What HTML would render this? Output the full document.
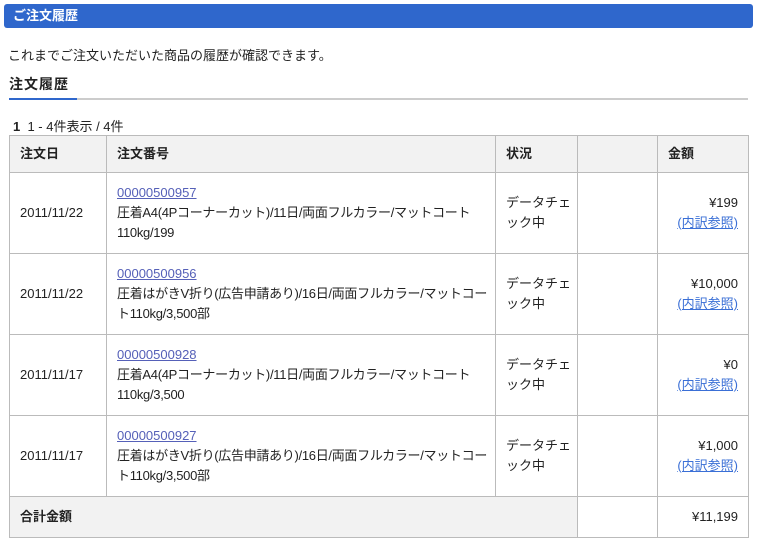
<!DOCTYPE html>
<html><head><meta charset="utf-8"><style>
body{margin:0;background:#fff;font-family:"Liberation Sans","Noto Sans CJK JP",sans-serif;font-size:13px;color:#222;width:765px;height:553px;overflow:hidden;position:relative}
.bar{position:absolute;left:4px;top:4px;width:749px;height:24px;background:#2f67cc;border-radius:3px;color:#fff;font-weight:bold;font-size:13px;line-height:24px;padding-left:9px;box-sizing:border-box}
.intro{position:absolute;left:8px;top:45px}
.h2{position:absolute;left:9px;top:74px;font-weight:bold;font-size:14px;letter-spacing:1px}
.line{position:absolute;left:9px;top:98px;width:739px;height:2px;background:#ccc}
.line i{position:absolute;left:0;top:0;width:68px;height:2px;background:#2f67cc}
.pg{position:absolute;left:13px;top:116px;font-size:13px}
table{position:absolute;left:9px;top:135px;border-collapse:collapse;width:739px;table-layout:fixed}
td,th{border:1px solid #bbb;padding:0 10px;vertical-align:middle;line-height:20px;text-align:left}
th{background:#f2f2f2;height:36px;font-weight:bold}
tr.r td{height:80px}
td.st{padding-right:4px}
td.num{white-space:nowrap;letter-spacing:-0.3px;overflow:hidden}
a{color:#3a6fd6;text-decoration:underline}
.num a{color:#5560b8;letter-spacing:0}
.rt{text-align:right}
tr.t td{height:40px}
tr.t td.g{background:#f2f2f2;font-weight:bold}
</style></head><body>
<div class="bar">ご注文履歴</div>
<div class="intro">これまでご注文いただいた商品の履歴が確認できます。</div>
<div class="h2">注文履歴</div>
<div class="line"><i></i></div>
<div class="pg"><b>1</b>&nbsp; 1 - 4件表示 / 4件</div>
<table>
<colgroup><col style="width:97px"><col style="width:389px"><col style="width:82px"><col style="width:80px"><col style="width:91px"></colgroup>
<tr><th>注文日</th><th>注文番号</th><th>状況</th><th></th><th>金額</th></tr>
<tr class="r"><td>2011/11/22</td><td class="num"><a>00000500957</a><br>圧着A4(4Pコーナーカット)/11日/両面フルカラー/マットコート<br>110kg/199</td><td class="st">データチェック中</td><td></td><td class="rt">¥199<br><a>(内訳参照)</a></td></tr>
<tr class="r"><td>2011/11/22</td><td class="num"><a>00000500956</a><br>圧着はがきV折り(広告申請あり)/16日/両面フルカラー/マットコー<br>ト110kg/3,500部</td><td class="st">データチェック中</td><td></td><td class="rt">¥10,000<br><a>(内訳参照)</a></td></tr>
<tr class="r"><td>2011/11/17</td><td class="num"><a>00000500928</a><br>圧着A4(4Pコーナーカット)/11日/両面フルカラー/マットコート<br>110kg/3,500</td><td class="st">データチェック中</td><td></td><td class="rt">¥0<br><a>(内訳参照)</a></td></tr>
<tr class="r"><td>2011/11/17</td><td class="num"><a>00000500927</a><br>圧着はがきV折り(広告申請あり)/16日/両面フルカラー/マットコー<br>ト110kg/3,500部</td><td class="st">データチェック中</td><td></td><td class="rt">¥1,000<br><a>(内訳参照)</a></td></tr>
<tr class="t"><td class="g" colspan="3">合計金額</td><td></td><td class="rt">¥11,199</td></tr>
</table>
</body></html>
